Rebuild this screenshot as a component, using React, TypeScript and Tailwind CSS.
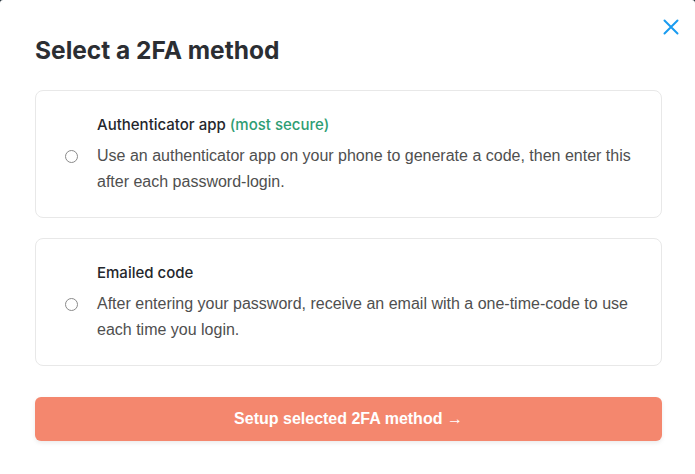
import * as React from "react";

type Method = {
    id: string;
    title: string;
    tag?: string;
    description: string;
};

const methods: Method[] = [
    {
        id: "app",
        title: "Authenticator app",
        tag: "(most secure)",
        description:
            "Use an authenticator app on your phone to generate a code, then enter this after each password-login.",
    },
    {
        id: "email",
        title: "Emailed code",
        description:
            "After entering your password, receive an email with a one-time-code to use each time you login.",
    },
];

function MethodCard({ method, checked, onSelect }: { method: Method; checked: boolean; onSelect: () => void }) {
    return (
        <label className="flex cursor-pointer rounded-lg border border-[#e8e8e8] pt-[23px] pb-[22px] pl-[29px] pr-6">
            <div className="flex w-[32px] shrink-0 flex-col pt-[36px]">
                <span
                    className={
                        checked
                            ? "flex h-[13px] w-[13px] items-center justify-center rounded-full border border-[#1a9cf0]"
                            : "flex h-[13px] w-[13px] items-center justify-center rounded-full border border-[#8a8a8a]"
                    }
                    onClick={onSelect}
                >
                    {checked && <span className="h-[7px] w-[7px] rounded-full bg-[#1a9cf0]" />}
                </span>
            </div>
            <div className="flex flex-col">
                <div className="font-['Inter',sans-serif] text-[15px] leading-[22px] font-medium text-[#24272c]">
                    {method.title}
                    {method.tag && <span className="ml-1 text-[#2e9d73]">{method.tag}</span>}
                </div>
                <p className="mt-[7px] font-['Liberation_Sans',Arial,sans-serif] text-[16px] leading-[26px] text-[#4f4f4f]">
                    {method.description}
                </p>
            </div>
        </label>
    );
}

export default function App() {
    const [selected, setSelected] = React.useState<string | null>(null);

    return (
        <div className="h-[474px] w-[695px] overflow-hidden bg-[#1d2a33]">
            <div className="relative h-[490px] rounded-t-[3px] bg-white pt-[34px] pr-[33px] pl-[35px]">
                {/* Close */}
                <button className="absolute top-[19px] right-[16px] text-[#1a9cf0]">
                    <svg width="16" height="16" viewBox="0 0 16 16" fill="none">
                        <path d="M1.5 1.5 14.5 14.5M14.5 1.5 1.5 14.5" stroke="currentColor" strokeWidth="2" strokeLinecap="round" />
                    </svg>
                </button>

                <h1 className="font-['Inter',sans-serif] text-[24.5px] leading-[32px] font-bold text-[#2b2e33]">
                    Select a 2FA method
                </h1>

                <div className="mt-[24px] flex flex-col gap-[20px]">
                    {methods.map((m) => (
                        <MethodCard key={m.id} method={m} checked={selected === m.id} onSelect={() => setSelected(m.id)} />
                    ))}
                </div>

                <button className="mt-[31px] flex h-[44px] w-full items-center justify-center rounded-md bg-[#f4876e] font-['Liberation_Sans',Arial,sans-serif] text-[16px] font-bold text-white shadow-[0_2px_4px_rgba(0,0,0,0.08)]">
                    Setup selected 2FA method →
                </button>
            </div>
        </div>
    );
}
